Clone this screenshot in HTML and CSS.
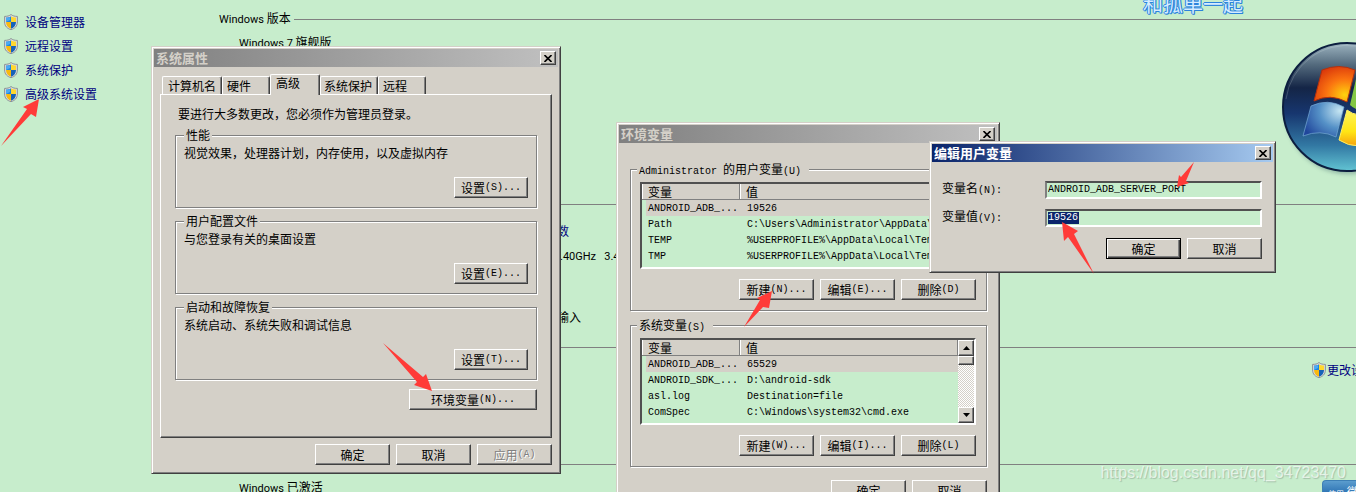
FILE: index.html
```html
<!DOCTYPE html>
<html lang="zh-CN">
<head>
<meta charset="utf-8">
<title>系统</title>
<link rel="stylesheet" href="styles.css">
</head>
<body>
<svg class="defs" width="0" height="0" aria-hidden="true">
  <defs>
    <clipPath id="shield-clip"><path d="M7 2.2C5.6 3.2 3.9 3.6 2 3.6V8c0 3.400 2 5.600 5 6.800 3-1.200 5-3.400 5-6.800V3.600C10.100 3.600 8.400 3.200 7 2.200z"/></clipPath>
    <symbol id="shield" viewBox="0 0 14 16">
      <path d="M7 .5C5.400 1.900 3.200 2.400.6 2.400V8c0 4.200 2.600 6.500 6.400 7.700 3.800-1.200 6.400-3.500 6.400-7.700V2.400C10.800 2.400 8.600 1.900 7 .5z" fill="#d9dbdc" stroke="#858a8f" stroke-width=".9"/>
      <g clip-path="url(#shield-clip)">
        <path d="M0 0h7v8H0z" fill="#1c86e0"/><path d="M7 0h7v8H7z" fill="#ffd72e"/>
        <path d="M0 8h7v8H0z" fill="#f8b90f"/><path d="M7 8h7v8H7z" fill="#1762b8"/>
        <path d="M2 4q3 0 4-1v3L2 8z" fill="#69c2ff" opacity=".6"/>
      </g>
    </symbol>
  </defs>
</svg>

<div class="desktop">
  <nav class="sidebar">
    <a href="#"><svg class="shield"><use href="#shield"/></svg>设备管理器</a>
    <a href="#"><svg class="shield"><use href="#shield"/></svg>远程设置</a>
    <a href="#"><svg class="shield"><use href="#shield"/></svg>系统保护</a>
    <a href="#"><svg class="shield"><use href="#shield"/></svg>高级系统设置</a>
  </nav>

  <main class="content">
    <section class="edition">
      <h2 class="rule"><span><span class="ui">Windows</span> 版本</span></h2>
      <div class="edition-body">
        <p><span class="ui">Windows 7</span> 旗舰版</p>
        <svg class="brand" viewBox="0 0 76 140" role="img" aria-label="Windows">
          <defs>
            <linearGradient id="orb" x1="0" y1="0" x2="0" y2="1"><stop offset="0" stop-color="#9db4c0"/><stop offset=".17" stop-color="#536a7d"/><stop offset=".35" stop-color="#142546"/><stop offset=".55" stop-color="#17366f"/><stop offset=".8" stop-color="#3278a3"/><stop offset="1" stop-color="#62c4d3"/></linearGradient>
            <radialGradient id="red" cx=".75" cy=".8" r=".9"><stop offset="0" stop-color="#ffd20e"/><stop offset=".5" stop-color="#fa7310"/><stop offset="1" stop-color="#d8330b"/></radialGradient>
            <radialGradient id="blue" cx=".9" cy=".25" r="1"><stop offset="0" stop-color="#c5e5f2"/><stop offset=".5" stop-color="#5591c7"/><stop offset="1" stop-color="#20469b"/></radialGradient>
            <linearGradient id="yellow" x1="0" y1="0" x2="0" y2="1"><stop offset="0" stop-color="#fff35a"/><stop offset=".6" stop-color="#ffe515"/><stop offset="1" stop-color="#f6a20f"/></linearGradient>
            <filter id="soft"><feGaussianBlur stdDeviation="2"/></filter>
          </defs>
          <circle cx="68" cy="72" r="63" fill="#4b6f72" opacity=".45" filter="url(#soft)"/>
          <circle cx="67" cy="68" r="64" fill="url(#orb)" stroke="#0c1e3f" stroke-width="2"/>
          <path d="M6 60A62 62 0 0 1 76 7" fill="none" stroke="#e5f0f2" stroke-opacity=".2" stroke-width="1"/>
          <path d="M42 31Q59 24 75 31L67 63Q50 54 34 62z" fill="url(#red)" stroke="#b5300d"/>
          <path d="M31 67Q48 59 64 68L56 98Q40 90 23 97z" fill="url(#blue)" stroke="#75abd6" stroke-width=".7"/>
          <path d="M67 71Q72 75 79 76V107Q68 107 59 101z" fill="url(#yellow)" stroke="#ffef63"/>
          <path d="M76 40L80 38V71Q74 70 70 66z" fill="#83c744"/>
        </svg>
      </div>
    </section>
    <section class="system">
      <h2 class="rule"></h2>
      <div class="spec">
        <a href="#">数</a>
        <p class="cpu ui">.40GHz&nbsp;&nbsp; 3.40 GHz</p>
        <p class="touch">输入</p>
      </div>
    </section>
    <section class="computer">
      <h2 class="rule"></h2>
      <a class="change" href="#"><svg class="shield"><use href="#shield"/></svg><span>更改设置</span></a>
    </section>
    <section class="activation">
      <h2 class="rule"></h2>
      <p><span class="ui">Windows</span> 已激活</p>
    </section>
  </main>

  <div class="lyric">和孤单一起</div>
  <div class="genuine"><small>使用</small> 微软</div>

  <section class="window win-system">
    <header class="titlebar"><h1>系统属性</h1><button class="close" aria-label="关闭"><svg viewBox="0 0 8 7"><path d="M.5 0l7 7M7.500 0l-7 7"/></svg></button></header>
    <div class="system-body">
      <div class="tabs" role="tablist">
        <button role="tab" class="tab w60">计算机名</button>
        <button role="tab" class="tab w48">硬件</button>
        <button role="tab" class="tab active" aria-selected="true">高级</button>
        <button role="tab" class="tab w58">系统保护</button>
        <button role="tab" class="tab w48">远程</button>
      </div>
      <div class="panel" role="tabpanel">
        <p class="intro">要进行大多数更改，您必须作为管理员登录。</p>
        <fieldset class="option"><legend>性能</legend><p>视觉效果，处理器计划，内存使用，以及虚拟内存</p><button class="btn">设置<span class="mono">(S)...</span></button></fieldset>
        <fieldset class="option"><legend>用户配置文件</legend><p>与您登录有关的桌面设置</p><button class="btn">设置<span class="mono">(E)...</span></button></fieldset>
        <fieldset class="option"><legend>启动和故障恢复</legend><p>系统启动、系统失败和调试信息</p><button class="btn">设置<span class="mono">(T)...</span></button></fieldset>
        <button class="btn env">环境变量<span class="mono">(N)...</span></button>
      </div>
      <footer class="actions"><button class="btn">确定</button><button class="btn">取消</button><button class="btn" disabled>应用<span class="mono">(A)</span></button></footer>
    </div>
  </section>

  <section class="window win-env">
    <header class="titlebar"><h1>环境变量</h1><button class="close" aria-label="关闭"><svg viewBox="0 0 8 7"><path d="M.5 0l7 7M7.500 0l-7 7"/></svg></button></header>
    <div class="env-body">
      <fieldset class="vars">
        <legend><span class="mono">Administrator </span>的用户变量<span class="mono">(U) </span></legend>
        <div class="list">
          <table>
            <thead><tr><th class="name">变量</th><th>值</th></tr></thead>
            <tbody class="mono">
              <tr class="selected"><td>ANDROID_ADB_...</td><td>19526</td></tr>
              <tr><td>Path</td><td>C:\Users\Administrator\AppData\Local</td></tr>
              <tr><td>TEMP</td><td>%USERPROFILE%\AppData\Local\Temp</td></tr>
              <tr><td>TMP</td><td>%USERPROFILE%\AppData\Local\Temp</td></tr>
            </tbody>
          </table>
        </div>
        <div class="actions"><button class="btn">新建<span class="mono">(N)...</span></button><button class="btn">编辑<span class="mono">(E)...</span></button><button class="btn">删除<span class="mono">(D)</span></button></div>
      </fieldset>
      <fieldset class="vars">
        <legend>系统变量<span class="mono">(S) </span></legend>
        <div class="list">
          <table>
            <thead><tr><th class="name">变量</th><th>值</th></tr></thead>
            <tbody class="mono">
              <tr class="selected"><td>ANDROID_ADB_...</td><td>65529</td></tr>
              <tr><td>ANDROID_SDK_...</td><td>D:\android-sdk</td></tr>
              <tr><td>asl.log</td><td>Destination=file</td></tr>
              <tr><td>ComSpec</td><td>C:\Windows\system32\cmd.exe</td></tr>
            </tbody>
          </table>
          <div class="scrollbar">
            <button aria-label="向上滚动"><svg viewBox="0 0 7 4"><path d="M0 4L3.500 0 7 4z"/></svg></button>
            <span class="thumb"></span>
            <button class="down" aria-label="向下滚动"><svg viewBox="0 0 7 4"><path d="M0 0h7L3.500 4z"/></svg></button>
          </div>
        </div>
        <div class="actions"><button class="btn">新建<span class="mono">(W)...</span></button><button class="btn">编辑<span class="mono">(I)...</span></button><button class="btn">删除<span class="mono">(L)</span></button></div>
      </fieldset>
      <footer class="actions"><button class="btn">确定</button><button class="btn">取消</button></footer>
    </div>
  </section>

  <section class="window win-edit">
    <header class="titlebar current"><h1>编辑用户变量</h1><button class="close" aria-label="关闭"><svg viewBox="0 0 8 7"><path d="M.5 0l7 7M7.500 0l-7 7"/></svg></button></header>
    <form class="edit-body">
      <div class="field"><label for="var-name">变量名<span class="mono">(N):</span></label><input id="var-name" type="text" class="mono" value="ANDROID_ADB_SERVER_PORT"></div>
      <div class="field"><label for="var-value">变量值<span class="mono">(V):</span></label><input id="var-value" type="text" class="mono marked" value="19526"></div>
      <div class="actions"><button type="button" class="btn default">确定</button><button type="button" class="btn">取消</button></div>
    </form>
  </section>

  <svg class="arrows" width="1356" height="492" viewBox="0 0 1356 492" aria-hidden="true">
    <path d="M39 99L23 107 27 109 1 146 31 114 36 117z"/>
    <path d="M432 391L426 374 423 377 383 343 417 382 414 385z"/>
    <path d="M772 291L757 298 760 300 744 327 763 307 769 308z"/>
    <path d="M1177 187L1179 175 1181 177 1194 162 1186 181 1189 183z"/>
    <path d="M1062 222L1078 231 1074 234 1094 274 1068 237 1064 241z"/>
  </svg>
  <div class="watermark">https://blog.csdn.net/qq_34723470</div>
</div>
</body>
</html>
```
FILE: styles.css
```css
* { box-sizing: border-box; }
body {
  margin: 0;
  background: #c7edcc;
  color: #000;
  font: 12px/16px "Noto Sans CJK SC", sans-serif;
}
p, h1, h2 { margin: 0; font-size: 12px; font-weight: 400; }
a { color: #000080; text-decoration: none; }
button, input { font: inherit; color: inherit; border-radius: 0; }
.defs { position: absolute; }
.mono { font-family: "Liberation Mono", monospace; font-size: 10px; white-space: pre; }
.ui { font-family: Roboto, sans-serif; font-size: 11px; }

.desktop {
  position: relative;
  display: grid;
  grid-template-columns: 219px 1fr;
  height: 100vh;
  min-height: 492px;
  overflow: hidden;
}
.shield { width: 14px; height: 16px; flex: none; }
.sidebar { display: flex; flex-direction: column; gap: 8px; padding: 14px 4px; }
.sidebar a { display: flex; gap: 7px; }

.content { padding-top: 12px; min-width: 0; }
.rule { display: flex; align-items: center; gap: 3px; height: 14px; white-space: nowrap; }
.rule::after { content: ""; flex: 1; height: 1px; background: #808080; }
.edition { height: 185px; }
.edition-body { display: flex; justify-content: space-between; padding: 8px 0 0 20px; }
.brand { width: 76px; height: 140px; margin-top: 5px; }
.system { height: 143px; }
.spec { display: flex; flex-direction: column; padding: 12px 0 0 338px; }
.cpu { padding: 10px 0 0 3px; white-space: nowrap; }
.touch { padding-top: 44px; }
.computer { height: 117px; }
.change { display: flex; gap: 1px; width: 44px; margin: 8px 0 0 auto; overflow: hidden; white-space: nowrap; }
.activation p { padding: 8px 0 0 20px; }

.lyric {
  position: absolute; top: -8px; right: 113px;
  color: #d5ecff; font-size: 20px; line-height: 24px;
  text-shadow: 1px 0 #2b83dc, -1px 0 #2b83dc, 0 1px #2b83dc, 0 -1px #2b83dc, 1px 1px #2b83dc;
}
.genuine {
  position: absolute; top: 480px; right: 0; width: 34px; height: 32px;
  padding: 3px 0 0 5px; overflow: hidden; white-space: nowrap;
  background: linear-gradient(#5b9dce, #2d73b3 12px);
  border: 1px solid #3d7fb5; border-right: 0; border-radius: 4px 0 0 0; color: #fff;
}
.genuine small { font-size: 8px; }

.window {
  position: absolute; padding: 2px;
  background: #d4d0c8;
  border: 1px solid; border-color: #d4d0c8 #404040 #404040 #d4d0c8;
  box-shadow: inset 1px 1px #fff, inset -1px -1px #808080;
}
.win-system { left: 151px; top: 46px; width: 410px; }
.win-env { left: 616px; top: 122px; width: 384px; }
.win-edit { left: 929px; top: 141px; width: 347px; }
.titlebar {
  display: flex; align-items: center; justify-content: space-between;
  height: 18px; padding: 0 2px;
  color: #d4d0c8; background: linear-gradient(90deg, #808080, #c0c0c0);
}
.titlebar.current { color: #fff; background: linear-gradient(90deg, #0a246a, #a6caf0); }
.titlebar h1 { font-size: 13px; font-weight: 700; }
.close, .btn, .scrollbar button, .thumb {
  display: flex; align-items: center; justify-content: center; padding: 0;
  background: #d4d0c8;
  border: 1px solid; border-color: #fff #404040 #404040 #fff;
  box-shadow: inset -1px -1px #808080;
}
.close { width: 16px; height: 14px; }
.close svg { width: 8px; height: 7px; }
.close path { stroke: #000; stroke-width: 1.6; }
.btn { width: 75px; height: 21px; white-space: nowrap; line-height: 16px; }
.btn:disabled { color: #808080; text-shadow: 1px 1px #fff; }
.btn.default { border-color: #000; box-shadow: inset 1px 1px #fff, inset -1px -1px #404040, inset -2px -2px #808080; }
.actions { display: flex; justify-content: flex-end; gap: 6px; }

fieldset { margin: 0; min-width: 0; border: 1px solid #808080; box-shadow: 1px 1px #fff, inset 1px 1px #fff; }
legend { height: 14px; padding: 0 2px; line-height: 14px; background: #d4d0c8; }

.system-body { padding: 7px 6px 6px; }
.tabs { display: flex; align-items: flex-end; height: 20px; padding-left: 2px; }
.tab {
  height: 18px; padding: 0 5px; text-align: left; white-space: nowrap; line-height: 16px;
  background: #d4d0c8;
  border: solid; border-width: 1px 1px 0; border-color: #fff #404040 #fff #fff;
  border-radius: 2px 2px 0 0; box-shadow: inset -1px 0 #808080;
}
.w60 { width: 60px; }
.w58 { width: 58px; padding: 0 3px; }
.w48 { width: 48px; padding: 0 4px; }
.tab.active { width: 50px; height: 21px; margin-bottom: -1px; padding-bottom: 4px; position: relative; }
.panel {
  padding: 11px 14px 27px;
  border: 1px solid; border-color: #fff #404040 #404040 #fff;
  box-shadow: inset -1px -1px #808080;
}
.intro { padding-left: 3px; margin-bottom: 6px; }
.option { padding: 3px 8px 9px 8px; margin-bottom: 6px; }
.option .btn { width: 74px; margin: 16px 0 0 auto; }
.env { width: 128px; margin: 9px 0 0 auto; }
.system-body > .actions { padding-top: 6px; }

.env-body { padding: 19px 10px 10px 11px; }
.vars { padding: 6px 10px 10px 9px; margin-bottom: 7px; }
.vars legend { margin-left: -3px; }
.env-body > .actions { padding-top: 6px; }
.list {
  display: flex; height: 87px; margin-bottom: 10px; overflow: hidden;
  background: #c7edcc;
  border: 2px solid; border-color: #505050 #fff #fff #505050;
}
table { flex: 1; width: 100%; height: 80px; table-layout: fixed; border-spacing: 0; }
th, td { height: 16px; padding: 0 0 0 6px; overflow: hidden; white-space: nowrap; text-align: left; font-weight: 400; line-height: 14px; }
th { background: #d4d0c8; border: solid; border-width: 0 1px 1px 0; border-color: #808080; box-shadow: inset 1px 0 #fff; }
td { padding: 1px 0 0 7px; }
.name { width: 98px; }
td:first-child { padding-left: 2px; border-left: 4px solid transparent; background-clip: padding-box; }
.selected td { background-color: #d4d0c8; }
.scrollbar {
  display: flex; flex-direction: column; width: 16px; flex: none;
  background: repeating-conic-gradient(#fff 0 25%, #d4d0c8 0 50%) 0 0 / 2px 2px;
}
.scrollbar button { width: 16px; height: 16px; }
.scrollbar svg { width: 7px; height: 4px; }
.thumb { height: 9px; }
.scrollbar .down { margin-top: auto; }

.edit-body { display: flex; flex-direction: column; gap: 9px; padding: 18px 11px 11px 10px; }
.field { display: grid; grid-template-columns: 103px 1fr; align-items: center; }
.field input {
  width: 100%; height: 18px; padding: 0 1px; background: #c7edcc;
  border: 2px solid; border-color: #505050 #fff #fff #808080; outline: 0;
}
.field input.marked { color: #fff; background: linear-gradient(#0a246a, #0a246a) 1px 1px / 31px 12px no-repeat #c7edcc; }
.edit-body .actions { padding-top: 2px; }

.arrows { position: absolute; left: 0; top: 0; pointer-events: none; fill: #ff3b38; }
.watermark {
  position: absolute; right: 10px; top: 463px;
  font: 16px/20px "Liberation Sans", sans-serif;
  color: rgba(255, 255, 255, .65); text-shadow: 1px 1px 1px rgba(120, 140, 125, .45);
}
```
